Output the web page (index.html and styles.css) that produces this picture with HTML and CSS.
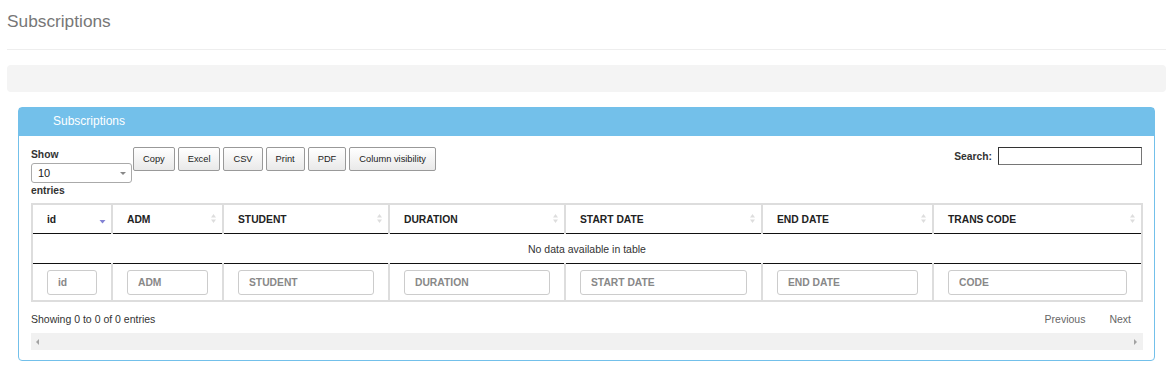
FILE: index.html
```html
<!DOCTYPE html>
<html>
  <head>
    <meta charset="utf-8">
    <title>Subscriptions</title>
    <link rel="stylesheet" href="styles.css">
  </head>
  <body>
    <div class="page">
      <h1 class="page-title">Subscriptions</h1>
      <hr class="title-rule">
      <div class="breadcrumb-bar"></div>

      <div class="panel">
        <div class="panel-heading">Subscriptions</div>
        <div class="panel-body">
          <div class="dt-top">
            <div class="dt-left">
              <label class="dt-length">
                Show
                <span class="select-box">10<span class="caret"></span></span>
                entries
              </label>
              <div class="dt-buttons">
                <button class="dt-btn">Copy</button>
                <button class="dt-btn">Excel</button>
                <button class="dt-btn">CSV</button>
                <button class="dt-btn">Print</button>
                <button class="dt-btn">PDF</button>
                <button class="dt-btn">Column visibility</button>
              </div>
            </div>
            <label class="dt-search">Search: <input type="text" class="search-input"></label>
          </div>

          <table class="dt-table">
            <colgroup>
              <col style="width: 80px">
              <col style="width: 111px">
              <col style="width: 166px">
              <col style="width: 176px">
              <col style="width: 197px">
              <col style="width: 171px">
              <col style="width: 209px">
            </colgroup>
            <thead>
              <tr>
                <th><div class="th-inner">id<svg class="sort" width="7" height="12" viewBox="0 0 7 12"><polygon points="0.5,7 6.5,7 3.5,10.5" fill="#8383d4"/></svg></div></th>
                <th><div class="th-inner">ADM<svg class="sort" width="7" height="12" viewBox="0 0 7 12"><polygon points="3.5,1 6,4.5 1,4.5" fill="#ddd"/><polygon points="1,6.5 6,6.5 3.5,10" fill="#ddd"/></svg></div></th>
                <th><div class="th-inner">STUDENT<svg class="sort" width="7" height="12" viewBox="0 0 7 12"><polygon points="3.5,1 6,4.5 1,4.5" fill="#ddd"/><polygon points="1,6.5 6,6.5 3.5,10" fill="#ddd"/></svg></div></th>
                <th><div class="th-inner">DURATION<svg class="sort" width="7" height="12" viewBox="0 0 7 12"><polygon points="3.5,1 6,4.5 1,4.5" fill="#ddd"/><polygon points="1,6.5 6,6.5 3.5,10" fill="#ddd"/></svg></div></th>
                <th><div class="th-inner">START DATE<svg class="sort" width="7" height="12" viewBox="0 0 7 12"><polygon points="3.5,1 6,4.5 1,4.5" fill="#ddd"/><polygon points="1,6.5 6,6.5 3.5,10" fill="#ddd"/></svg></div></th>
                <th><div class="th-inner">END DATE<svg class="sort" width="7" height="12" viewBox="0 0 7 12"><polygon points="3.5,1 6,4.5 1,4.5" fill="#ddd"/><polygon points="1,6.5 6,6.5 3.5,10" fill="#ddd"/></svg></div></th>
                <th><div class="th-inner">TRANS CODE<svg class="sort" width="7" height="12" viewBox="0 0 7 12"><polygon points="3.5,1 6,4.5 1,4.5" fill="#ddd"/><polygon points="1,6.5 6,6.5 3.5,10" fill="#ddd"/></svg></div></th>
              </tr>
            </thead>
            <tbody>
              <tr>
                <td class="empty" colspan="7">No data available in table</td>
              </tr>
            </tbody>
            <tfoot>
              <tr>
                <td><input class="col-filter" placeholder="id"></td>
                <td><input class="col-filter" placeholder="ADM"></td>
                <td><input class="col-filter" placeholder="STUDENT"></td>
                <td><input class="col-filter" placeholder="DURATION"></td>
                <td><input class="col-filter" placeholder="START DATE"></td>
                <td><input class="col-filter" placeholder="END DATE"></td>
                <td><input class="col-filter" placeholder="CODE"></td>
              </tr>
            </tfoot>
          </table>

          <div class="dt-bottom">
            <div class="dt-info">Showing 0 to 0 of 0 entries</div>
            <div class="dt-paginate">
              <span class="page-btn">Previous</span>
              <span class="page-btn">Next</span>
            </div>
          </div>

          <div class="h-scroll">
            <span class="arrow-left"></span>
            <span class="arrow-right"></span>
          </div>
        </div>
      </div>
    </div>
  </body>
</html>
```

FILE: styles.css
```css
body {
  margin: 0;
  font-family: "Liberation Sans", Arial, sans-serif;
  font-size: 10.5px;
  color: #333;
  background: #fff;
}

.page {
  padding: 0 3px 0 7px;
}

.page-title {
  margin: 0;
  padding-top: 11px;
  font-size: 17.3px;
  line-height: 20px;
  font-weight: normal;
  color: #777;
}

.title-rule {
  margin: 18px 0 0;
  border: 0;
  border-top: 1px solid #eee;
}

.breadcrumb-bar {
  margin-top: 15px;
  height: 27px;
  background: #f4f4f4;
  border-radius: 4px;
}

.panel {
  margin: 15px 11px 0;
  border: 1px solid #73c0ea;
  border-radius: 4px;
}

.panel-heading {
  height: 28px;
  line-height: 27px;
  padding: 0 34px;
  background: #73c0ea;
  color: #fff;
  font-size: 12px;
}

.panel-body {
  padding: 11px 12px 10px;
}

.dt-top {
  display: flex;
  justify-content: space-between;
  align-items: flex-start;
}

.dt-left {
  display: flex;
  align-items: flex-start;
}

.dt-length {
  width: 101px;
  font-weight: bold;
  font-size: 10.3px;
  line-height: 14px;
  padding-top: 1px;
}

.select-box {
  display: block;
  position: relative;
  height: 20px;
  line-height: 19px;
  margin: 1px 0 1px;
  padding-left: 6px;
  border: 1px solid #aaa;
  border-radius: 3px;
  box-sizing: border-box;
  font-weight: normal;
  font-size: 11px;
  color: #222;
}

.caret {
  position: absolute;
  right: 5px;
  top: 8px;
  border-left: 3px solid transparent;
  border-right: 3px solid transparent;
  border-top: 3px solid #888;
}

.dt-buttons {
  display: flex;
  gap: 3px;
  margin-left: 1px;
}

.dt-btn {
  height: 24px;
  padding: 0 9px;
  border: 1px solid #999;
  border-radius: 2px;
  background: linear-gradient(#fff, #e9e9e9);
  font-family: "Liberation Sans", Arial, sans-serif;
  font-size: 9.3px;
  color: #222;
  cursor: pointer;
}

.dt-search {
  display: flex;
  align-items: center;
  font-weight: bold;
  font-size: 10.3px;
}

.search-input {
  margin: 0 0 0 6px;
  width: 144px;
  height: 18px;
  box-sizing: border-box;
  border: 1px solid #767676;
  border-top-color: #333;
  border-left-color: #333;
  padding: 0 4px;
}

.dt-table {
  margin-top: 5px;
  width: 1110px;
  table-layout: fixed;
  border-collapse: collapse;
}

.dt-table th {
  padding: 0;
  border: 2px solid #ddd;
  border-bottom: 1px solid #111;
  text-align: left;
  font-weight: bold;
  font-size: 10.3px;
  color: #222;
}

.th-inner {
  display: flex;
  justify-content: space-between;
  align-items: center;
  height: 28px;
  padding: 0 5px 0 14px;
}

.dt-table td.empty {
  height: 29px;
  padding: 0;
  border-left: 2px solid #ddd;
  border-right: 2px solid #ddd;
  text-align: center;
  color: #333;
}

.dt-table tfoot td {
  padding: 6px 14px 5px 14px;
  border: 2px solid #ddd;
  border-top: 1px solid #111;
}

.col-filter {
  display: block;
  width: 100%;
  height: 25px;
  box-sizing: border-box;
  margin: 0;
  padding: 0 10px;
  border: 1px solid #ccc;
  border-radius: 3px;
  font-family: "Liberation Sans", Arial, sans-serif;
  font-size: 10.3px;
  font-weight: bold;
}

.col-filter::placeholder {
  color: #888;
}

.dt-bottom {
  display: flex;
  justify-content: space-between;
  align-items: center;
  margin-top: 9px;
  line-height: 16px;
}

.dt-paginate {
  display: flex;
  gap: 2px;
}

.page-btn {
  padding: 0 11px;
  color: #666;
}

.h-scroll {
  position: relative;
  margin-top: 6px;
  width: 1112px;
  height: 17px;
  background: #f1f1f1;
}

.arrow-left,
.arrow-right {
  position: absolute;
  top: 6px;
  border-top: 3px solid transparent;
  border-bottom: 3px solid transparent;
}

.arrow-left {
  left: 5px;
  border-right: 3px solid #a3a3a3;
}

.arrow-right {
  right: 6px;
  border-left: 3px solid #a3a3a3;
}
```
